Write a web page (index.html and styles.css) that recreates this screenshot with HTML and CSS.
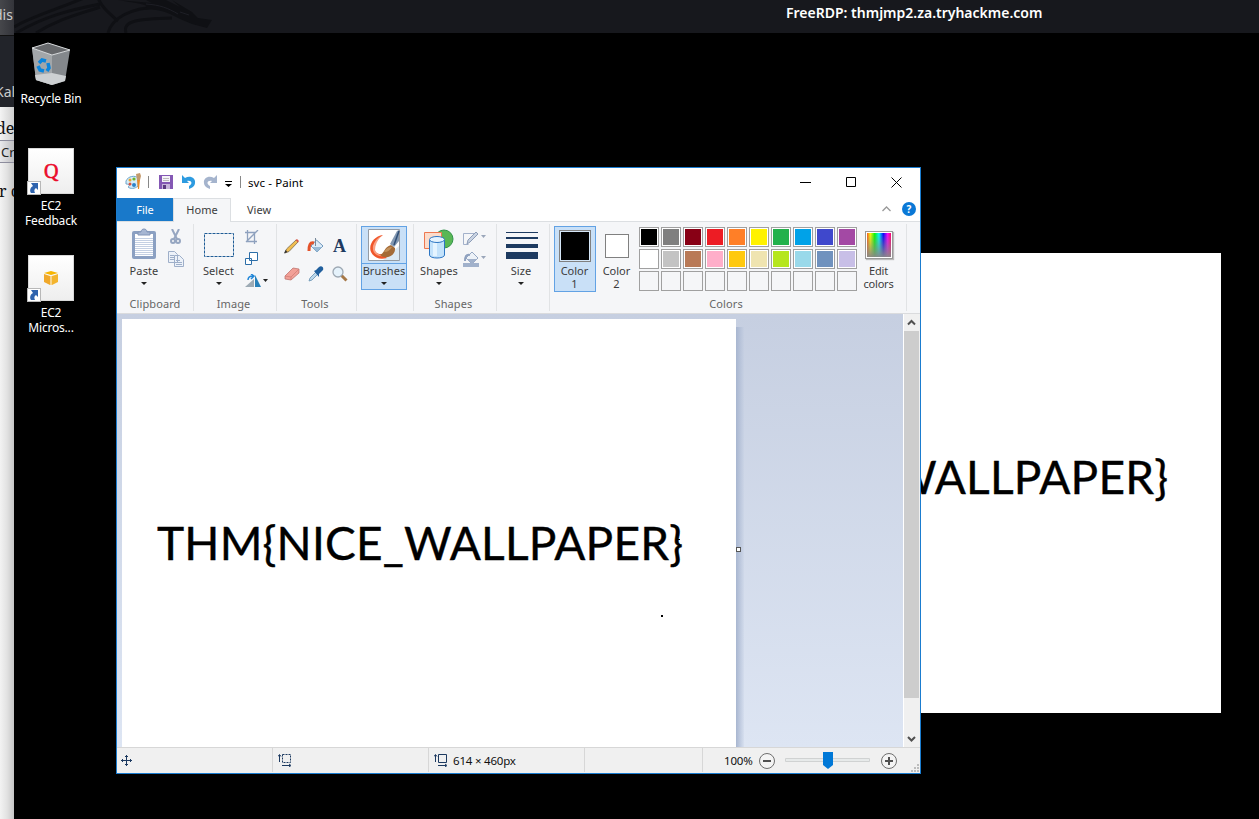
FILE: index.html
```html
<!DOCTYPE html>
<html lang="en">
<head>
<meta charset="utf-8">
<title>FreeRDP: thmjmp2.za.tryhackme.com</title>
<link rel="stylesheet" href="styles.css">
</head>
<body>
<div class="screen">
  <aside class="behind">
    <div class="behind-title"><span>dis</span></div>
    <div class="behind-tabs"><span>Kal</span></div>
    <div class="behind-line serif"><span>de</span></div>
    <div class="behind-box"><span>Cr</span></div>
    <div class="behind-page serif"><span>r o</span></div>
  </aside>
  <section class="remote">
    <header class="rdp-bar">
      <svg class="dragon" width="226" height="33" viewBox="14 0 226 33">
        <g fill="none" stroke="#0f1014" stroke-width="3">
          <path d="M14 27C30 17 55 10 84 -2"/><path d="M16 33C45 16 70 10 100 4"/><path d="M36 33C60 18 80 14 100 7"/>
          <path d="M98 -2C102 8 110 14 118 21"/><path d="M108 33C112 18 130 8 158 7"/><path d="M126 33C122 20 140 19 172 18"/>
        </g>
        <path fill="#0f1014" d="M118 0L152 3L142 -2H162L180 7L172 0L192 12L198 18L212 20L207 28L192 24L180 19L170 14C158 9 150 9 140 10C156 5 140 4 118 0Z"/>
        <path fill="none" stroke="#1d1e25" d="M146 4C160 5 168 8 178 14M180 12l9 3"/>
      </svg>
      <span class="rdp-title">FreeRDP: thmjmp2.za.tryhackme.com</span>
    </header>
    <nav class="shortcuts">
      <div class="shortcut bin">
        <svg width="40" height="44" viewBox="0 0 40 44">
          <path fill="#84888c" d="M1 6L20 13L39 8L34 39L21 43L5 38Z"/>
          <path fill="#a2a6a9" d="M1 6L21 13V43L5 38Z"/>
          <path fill="#66686b" d="M1 6L17 1L39 8L21 13Z"/>
          <path fill="#cdd0d2" d="M4 33L21 31L35 34L34 39L21 43L5 38Z"/>
          <path fill="none" stroke="#d9dcde" d="M1 6L17 1L39 8L21 13Z"/>
          <g fill="none" stroke="#0a84dc" stroke-width="3.500"><path d="M8 21l3-3 4 1"/><path d="M17 21l1 5-2 3"/><path d="M13 29l-4-1-2-4"/></g>
        </svg>
        <span>Recycle Bin</span>
      </div>
      <div class="shortcut">
        <div class="tile"><span class="q">Q</span><svg class="link" width="12" height="12" viewBox="0 0 12 12"><path fill="#fff" d="M0 0h12v12H0z"/><path fill="#2f64ae" d="M3 1h7v7L8 6C6 7 6 9 7 11H3C1 8 3 5 5 4Z"/></svg></div>
        <span>EC2<br>Feedback</span>
      </div>
      <div class="shortcut">
        <div class="tile"><svg width="16" height="16" viewBox="0 0 16 16"><path fill="#f7b500" d="M8 1L15 3L8 5L1 3Z"/><path fill="#f0a82a" d="M1 4L7 6V15L1 12Z"/><path fill="#f3b42e" d="M15 4L9 6V15L15 12Z"/><path fill="#f8d48c" d="M7 6h2v9H7z"/></svg><svg class="link" width="12" height="12" viewBox="0 0 12 12"><path fill="#fff" d="M0 0h12v12H0z"/><path fill="#2f64ae" d="M3 1h7v7L8 6C6 7 6 9 7 11H3C1 8 3 5 5 4Z"/></svg></div>
        <span>EC2<br>Micros...</span>
      </div>
    </nav>
  </section>

  <div class="wallpaper">
    <svg width="614" height="460"><text class="flag" x="35" y="241" textLength="526" lengthAdjust="spacing">THM{NICE_WALLPAPER}</text></svg>
  </div>

  <main class="paint">
    <div class="titlebar">
      <div class="quick">
        <svg width="18" height="18" viewBox="0 0 18 18"><path fill="#d7ecf8" stroke="#6da6cc" d="M2 8C4 3 11 2 14 5V13C11 16 6 16 4 14C7 12 4 11 2 11Z"/><circle cx="6" cy="7" r="1.500" fill="#e6a72c"/><circle cx="10" cy="6" r="1.600" fill="#6cb52d"/><circle cx="6" cy="11" r="1.500" fill="#d95445"/><circle cx="10" cy="12" r="2" fill="#2c83ca"/><path fill="#ea8a28" d="M13 7h3l-1 9h-1z"/><path fill="#c49a6c" d="M12 1l4-1 1 3-1 4h-3z"/></svg>
        <i class="bar"></i>
        <svg class="save" width="14" height="14"><path fill="#8458b4" d="M0 0h14v14H0z"/><path fill="#f4f2f8" d="M3 1h8v6H3z"/><path fill="#c6b4da" d="M3 9h8v5H3z"/><path fill="#5b3a80" d="M4 10h3v4H4z"/><path stroke="#bbb" d="M4 3.500h6M4 5.500h6"/></svg>
        <svg class="undo" width="14" height="14" viewBox="0 0 14 14"><path fill="#2d9be0" d="M0 0l3 3C8 0 14 3 13 8c0 3-3 5-6 6v-3c4-2 3-6-2-5l2 2H0z"/></svg>
        <svg class="redo" width="14" height="14" viewBox="0 0 14 14"><path fill="#a5b4cd" d="M14 0l-3 3C6 0 0 3 1 8c0 3 3 5 6 6v-3C3 9 4 5 9 6L7 8h7z"/></svg>
        <svg class="more" width="7" height="6"><path d="M0 0h7v1H0zM0 3h7L3.500 6z"/></svg>
        <i class="bar"></i>
      </div>
      <span class="title">svc - Paint</span>
      <div class="caption">
        <svg width="11" height="11"><path stroke="#000" d="M0 5.500h11"/></svg>
        <svg width="11" height="11"><path fill="none" stroke="#000" d="M.5.500h9v9h-9z"/></svg>
        <svg width="11" height="11"><path stroke="#000" d="M.5.500l10 10M10.500.500l-10 10"/></svg>
      </div>
    </div>
    <div class="tabs">
      <span class="tab file">File</span><span class="tab home">Home</span><span class="tab view">View</span>
      <div class="help">
        <svg width="9" height="6"><path fill="none" stroke="#999" stroke-width="1.300" d="M.5 5L4.500 1l4 4"/></svg>
        <span>?</span>
      </div>
    </div>
    <div class="ribbon">
      <div class="group clipboard">
        <div class="body">
          <div class="big">
            <div class="pic"><svg width="26" height="32" viewBox="0 0 26 32"><rect x="1" y="3" width="24" height="28" rx="2" fill="#8ba0c2"/><path fill="#fff" d="M4 6h18v22H4z"/><path stroke="#c4d0e3" d="M4 10.500h18M4 12.500h18M4 14.500h18M4 16.500h18M4 18.500h18M4 20.500h18M4 22.500h18M4 24.500h18M4 26.500h18"/><path fill="#a6b6d2" stroke="#8396b8" d="M7 7V4h3c0-4 6-4 6 0h3v3z"/></svg></div>
            <span>Paste</span><i class="arrow"></i>
          </div>
          <div class="stack">
            <svg width="16" height="16" viewBox="0 0 16 16"><g fill="none" stroke="#96a6c1" stroke-width="2"><path d="M4 0l5 10M11 0L6 10"/><circle cx="5" cy="12" r="2"/><circle cx="10" cy="12" r="2"/></g></svg>
            <svg width="16" height="16" viewBox="0 0 16 16"><g fill="#edf2f9" stroke="#9eafc9"><path d="M.5.500h6l3 3v8h-9zM6.500 4.500h5l4 4v7h-9z"/><path d="M2 4.500h4M2 6.500h4M2 8.500h4M8 9.500h4M8 11.500h6M8 13.500h6"/></g></svg>
          </div>
        </div>
        <footer>Clipboard</footer>
      </div>
      <div class="group image">
        <div class="body">
          <div class="big">
            <div class="pic"><svg width="30" height="24"><path fill="none" stroke="#1e5c96" stroke-dasharray="3 1" d="M.5.500h29v23H.5z"/></svg></div>
            <span>Select</span><i class="arrow"></i>
          </div>
          <div class="stack three">
            <svg width="14" height="14"><path fill="none" stroke="#8ea1be" stroke-width="1.300" d="M2.500 0v11.500H12M0 2.500h9.500V14M1 12L13 0"/></svg>
            <svg width="14" height="14"><path fill="#fff" stroke="#2c6ea8" d="M.5 6.500h6v6h-6zM4.500.500h8v8h-8z"/></svg>
            <svg width="24" height="14"><path fill="#9daab4" d="M0 13h9V5z"/><path fill="#2780b9" d="M10 1v12h6z"/><path fill="none" stroke="#2086d8" stroke-width="1.500" d="M3 6c0-3 2-4 5-4M6 0l3 2-3 3"/><path fill="#222" d="M18 5h5l-2.500 3z"/></svg>
          </div>
        </div>
        <footer>Image</footer>
      </div>
      <div class="group tools">
        <div class="body toolgrid">
          <svg width="16" height="16" viewBox="0 0 16 16"><path stroke="#6a5d48" stroke-width=".7" fill="#f0bd50" d="M1 15l1.500-4L12 2l2 2-9 9.500z"/><path fill="#d95a48" d="M11.500 2l1.500-1 2 2-1 1.500z"/><path fill="#333" d="M0 15.500L1.500 12l2 2z"/></svg>
          <svg width="17" height="16" viewBox="0 0 17 16"><path fill="#deecf8" stroke="#6d96bb" d="M9.500 2L16 8L10 14L4 8Z"/><path fill="#99bbd7" d="M5 9h10l-5 5z"/><path stroke="#789" d="M8.500 0v8"/><path fill="none" stroke="#e4532b" stroke-width="3" d="M7 5C3 4 2 7 2 13"/></svg>
          <span class="letter">A</span>
          <svg width="16" height="14" viewBox="0 0 16 14"><path fill="#f2a097" stroke="#b76b66" stroke-width=".7" d="M1 9L9 1l6 1v4l-8 7-6-1z"/><path stroke="#cf7b74" fill="none" stroke-width=".7" d="M1 9l6 1 8-8M7 10v3"/></svg>
          <svg width="16" height="16" viewBox="0 0 16 16"><path fill="#bdd8eb" stroke="#6590b1" stroke-width=".8" d="M1 15l1-3 6-6 2 2-6 6z"/><path fill="#205f9d" d="M6 5l2-1 3-3c3-2 5 1 4 3l-4 4v3z"/></svg>
          <svg width="16" height="16" viewBox="0 0 16 16"><path stroke="#a57847" stroke-width="3" d="M9.500 9.500l5 5"/><circle cx="6" cy="6" r="5" fill="#e5f2fb" stroke="#9da8b3" stroke-width="1.300"/></svg>
        </div>
        <footer>Tools</footer>
      </div>
      <div class="group brushes">
        <div class="big picked">
          <div class="pic"><svg width="32" height="32" viewBox="0 0 32 32"><path fill="#fff" stroke="#949ba4" d="M.5.500h31v31H.5z"/><path fill="#dbe9f4" d="M15 31L31 17v14z"/><path fill="#f0562a" d="M15 6C6 7 0 16 3 23C6 29 12 31 19 29L14 25C8 26 5 21 7 16C8 12 11 9 15 6Z"/><path fill="#f9a184" d="M5 17C7 11 10 9 13 7C9 12 7 16 7 21C9 26 13 26 16 27C9 28 4 24 5 17Z"/><path fill="#a46b37" d="M12 26c4-1 4-8 11-10l4 3c1 8-9 12-15 7z"/><path fill="#c3925d" d="M16 23c2-4 5-5 8-5-2 3-4 5-8 5z"/><path fill="#8398b1" d="M22 15L29 2l2-1v11l-5 6z"/><path stroke="#304f77" stroke-width="1.500" d="M31 2l-5 14"/></svg></div>
          <span>Brushes</span><i class="arrow"></i>
        </div>
      </div>
      <div class="group shapes">
        <div class="body">
          <div class="big">
            <div class="pic"><svg width="30" height="30" viewBox="0 0 30 30"><circle cx="20" cy="10" r="9" fill="#59b755" stroke="#32934a"/><path fill="#fbdccb" stroke="#ed7850" d="M.5 3.500h17v16H.5z"/><path fill="#c3e2fb" stroke="#2d76c3" d="M5.500 11v15c0 4 15 4 15 0V11"/><path fill="#e5f4ff" d="M9 13h4v14H9z"/><ellipse cx="13" cy="10.500" rx="7.500" ry="3" fill="#e5f3fe" stroke="#2d76c3"/></svg></div>
            <span>Shapes</span><i class="arrow"></i>
          </div>
          <div class="stack">
            <svg width="24" height="16"><path fill="none" stroke="#a3b1ca" d="M12 2.500H.5v11h5"/><path fill="#c9d3e2" stroke="#8d9db8" d="M4 13l1-4L13 1l2 2-8 8z"/><path fill="#9aa6ba" d="M18 4h5l-2.500 3z"/></svg>
            <svg width="24" height="17"><path fill="#edf2f8" stroke="#96a8c4" d="M9 1l6 6-6 6-6-6z"/><path fill="#a1b1cb" d="M4 8h10l-5 5zM0 12h16v4H0z"/><path fill="none" stroke="#8fa1bf" stroke-width="2" d="M7 4C3 3 2 6 2 10"/><path fill="#9aa6ba" d="M18 5h5l-2.500 3z"/></svg>
          </div>
        </div>
        <footer>Shapes</footer>
      </div>
      <div class="group size">
        <div class="body">
          <div class="big">
            <div class="pic"><svg width="32" height="28"><path fill="#1d3a60" d="M0 0h32v1H0zM0 5h32v2H0zM0 12h32v4H0zM0 20h32v7H0z"/></svg></div>
            <span>Size</span><i class="arrow"></i>
          </div>
        </div>
      </div>
      <div class="group colors">
        <div class="body">
          <div class="color picked"><div class="pic"><i class="well black"></i></div><span>Color<br>1</span></div>
          <div class="color"><div class="pic"><i class="well white"></i></div><span>Color<br>2</span></div>
          <div class="palette">
            <i style="background:#000"></i><i style="background:#7f7f7f"></i><i style="background:#880015"></i><i style="background:#ed1c24"></i><i style="background:#ff7f27"></i><i style="background:#fff200"></i><i style="background:#22b14c"></i><i style="background:#00a2e8"></i><i style="background:#3f48cc"></i><i style="background:#a349a4"></i>
            <i style="background:#fff"></i><i style="background:#c3c3c3"></i><i style="background:#b97a57"></i><i style="background:#ffaec9"></i><i style="background:#ffc90e"></i><i style="background:#efe4b0"></i><i style="background:#b5e61d"></i><i style="background:#99d9ea"></i><i style="background:#7092be"></i><i style="background:#c8bfe7"></i>
            <i class="none"></i><i class="none"></i><i class="none"></i><i class="none"></i><i class="none"></i><i class="none"></i><i class="none"></i><i class="none"></i><i class="none"></i><i class="none"></i>
          </div>
          <div class="color edit"><div class="pic"><i class="rainbow"></i></div><span>Edit<br>colors</span></div>
        </div>
        <footer>Colors</footer>
      </div>
    </div>
    <div class="workspace">
      <div class="desk">
        <div class="paper"><svg width="614" height="428"><text class="flag" x="35" y="241" textLength="526" lengthAdjust="spacing">THM{NICE_WALLPAPER}</text><path d="M556 220h2v1h-2zM539 296h2v2h-2z"/></svg><i class="handle"></i></div>
        <div class="shade"></div>
      </div>
      <div class="scroll">
        <svg width="15" height="17"><path fill="none" stroke="#505050" stroke-width="2" d="M4 10.500L7.500 7L11 10.500"/></svg>
        <i class="thumb"></i>
        <svg width="15" height="17"><path fill="none" stroke="#505050" stroke-width="2" d="M4 7L7.500 10.500L11 7"/></svg>
      </div>
    </div>
    <div class="status">
      <div class="cell c1"><svg width="11" height="11"><path fill="none" stroke="#1d3a60" d="M5.500 0v11M0 5.500h11M4 2l1.500-1.500L7 2M4 9l1.500 1.500L7 9M2 4L.5 5.500L2 7M9 4l1.500 1.500L9 7"/></svg></div>
      <div class="cell c2"><svg width="14" height="13"><path fill="none" stroke="#1d3a60" d="M1.500 8V1M0 2.500l1.500-2 1.500 2M4 11.500h8M11 10l2 1.500-2 1.500"/><path fill="none" stroke="#1d3a60" stroke-dasharray="2 1" d="M4.500.500h8v8h-8z"/></svg></div>
      <div class="cell c3"><svg width="14" height="13"><path fill="none" stroke="#1d3a60" d="M1.500 8V1M0 2.500l1.500-2 1.500 2M4 11.500h8M11 10l2 1.500-2 1.500M4.500.500h8v8h-8z"/></svg><span>614 × 460px</span></div>
      <div class="cell c4"></div>
      <div class="zoom">
        <span>100%</span>
        <svg width="16" height="16"><circle cx="8" cy="8" r="7.500" fill="#f4f4f4" stroke="#6e6e6e"/><path fill="#505050" d="M4 7h8v2H4z"/></svg>
        <svg class="slider" width="85" height="18"><path fill="#e7eaea" stroke="#d0d2d2" d="M.5 6.500h84v3H.5z"/><path fill="#0078d7" d="M38 0h10v13l-5 4-5-4z"/></svg>
        <svg width="16" height="16"><circle cx="8" cy="8" r="7.500" fill="#f4f4f4" stroke="#6e6e6e"/><path fill="#505050" d="M4 7h8v2H4zM7 4h2v8H7z"/></svg>
        <svg class="grip" width="8" height="8"><path fill="#bcbcbc" d="M6 0h2v2H6zM3 3h2v2H3zM6 3h2v2H6zM0 6h2v2H0zM3 6h2v2H3zM6 6h2v2H6z"/></svg>
      </div>
    </div>
  </main>
</div>
</body>
</html>
```
FILE: styles.css
```css
* { box-sizing: border-box; }
body { margin: 0; background: #000; font: 11px/13px "Noto Sans", sans-serif; }
svg { display: block; flex: none; }
i { display: block; flex: none; }
.screen { position: relative; display: flex; width: 1259px; height: 819px; overflow: hidden; background: #000; }

.behind { width: 14px; overflow: hidden; background: #eee; font-size: 14px; line-height: 20px; white-space: nowrap; }
.behind > div { display: flex; align-items: flex-start; }
.behind span { display: block; flex: none; }
.behind-title { height: 36px; padding-top: 5px; background: linear-gradient(90deg, #46474b, #33343a); color: #ccc; border-bottom: 1px solid #111; }
.behind-title span { margin-left: -6px; }
.behind-tabs { height: 71px; padding-top: 46px; background: #22242a; color: #ccc; }
.behind-tabs span { margin-left: -5px; }
.serif { font-family: "Noto Serif", "DejaVu Serif", serif; font-size: 16px; color: #111; }
.behind-line { height: 33px; padding-top: 11px; background: linear-gradient(90deg, #f4f4f4, #cfcfcf); }
.behind-line span { margin-left: -4px; }
.behind-box { height: 23px; padding-top: 1px; background: linear-gradient(90deg, #e9e9ec, #bdbdc0); border-top: 1px solid #8d8d9d; border-bottom: 1px solid #8d8d9d; font-size: 13px; color: #222; }
.behind-box span { margin-left: 1px; }
.behind-page { height: 656px; padding-top: 18px; background: linear-gradient(90deg, #f3f3f3, #e2e2e2 50%, #c6c6c6); }
.behind-page span { margin-left: -1px; }

.remote { flex: 1; }
.rdp-bar { display: flex; height: 33px; background: #17181d; color: #fff; }
.rdp-title { width: 258px; margin-left: 546px; font-size: 14px; line-height: 26px; font-weight: 600; white-space: nowrap; }
.shortcuts { display: flex; flex-direction: column; width: 74px; padding-top: 9px; color: #fff; }
.shortcut { display: flex; flex-direction: column; align-items: center; height: 107px; font-size: 12px; line-height: 15px; text-align: center; letter-spacing: -.2px; }
.shortcut > span { white-space: nowrap; margin-top: 4px; }
.bin { height: 106px; }
.bin > span { margin-top: 5px; }
.tile { position: relative; display: flex; align-items: center; justify-content: center; width: 46px; height: 46px; background: linear-gradient(#fff, #eee); border: 1px solid #d8d8d8; }
.q { font: 20px/20px "Liberation Serif", serif; color: #ea0a2a; -webkit-text-stroke: .6px #ea0a2a; }
.link { position: absolute; left: -2px; bottom: -2px; border: 1px solid #b8b8b8; box-sizing: content-box; }

.wallpaper { position: absolute; left: 607px; top: 253px; width: 614px; height: 460px; background: #fff; }
.flag { font: 46px Lato, sans-serif; fill: #000; stroke: #000; stroke-width: .4px; }

.paint { position: absolute; left: 116px; top: 167px; width: 805px; height: 607px; display: flex; flex-direction: column; background: #fff; border: 1px solid #1a7ccf; color: #3c3c3c; }
.titlebar { display: flex; align-items: center; height: 30px; padding-bottom: 2px; color: #000; }
.quick { display: flex; align-items: center; width: 124px; padding-left: 7px; }
.bar { width: 1px; height: 12px; background: #888; margin-left: 6px; }
.save { margin-left: 10px; }
.undo { margin-left: 9px; }
.redo { margin-left: 7px; }
.more { margin: 3px 0 0 8px; }
.more + .bar { margin-left: 8px; }
.title { margin-left: 7px; font-size: 11.500px; letter-spacing: .1px; }
.caption { display: flex; gap: 34.500px; margin-left: auto; padding-right: 18px; }
.tabs { display: flex; height: 24px; border-bottom: 1px solid #dcdfe2; }
.tab { text-align: center; line-height: 24px; font-size: 11px; }
.file { width: 56px; background: #1979ca; color: #fff; height: 23px; }
.home { width: 58px; height: 24px; background: #f5f6f8; border: 1px solid #dcdfe2; border-bottom: 0; line-height: 22px; }
.view { width: 56px; }
.help { display: flex; align-items: center; gap: 11px; margin: -1px 0 0 auto; padding-right: 4px; }
.help span { width: 14px; height: 14px; border-radius: 50%; background: #0a78d6; color: #fff; text-align: center; font-weight: bold; line-height: 14px; font-size: 10px; }

.ribbon { display: flex; height: 92px; padding-top: 2px; background: #f5f6f8; border-bottom: 1px solid #dadbdd; }
.group { position: relative; display: flex; flex-direction: column; height: 87px; border-right: 1px solid #e1e3e5; }
.body { display: flex; height: 73px; }
.group footer { text-align: center; color: #666; line-height: 14px; letter-spacing: .1px; }
.big { display: flex; flex-direction: column; align-items: center; }
.big .pic { display: flex; align-items: center; justify-content: center; height: 40px; }
.big > span { line-height: 13px; letter-spacing: .1px; white-space: nowrap; }
.arrow { width: 0; height: 0; margin-top: 5px; border: 3px solid transparent; border-top-color: #222; border-bottom: 0; }
.stack { display: flex; flex-direction: column; gap: 6px; padding-top: 5px; }
.clipboard { width: 77px; }
.clipboard .big { width: 54px; }
.clipboard .stack { margin-left: -3px; }
.image { width: 83px; }
.image footer { padding-right: 3px; }
.image .big { width: 50px; padding-right: 1px; }
.image .pic { padding: 1px 0 0 1px; }
.image .stack { gap: 8px; padding-top: 6px; margin-left: 1px; }
.tools { width: 80px; }
.tools footer { padding-right: 3px; }
.toolgrid { display: grid; grid-template-columns: repeat(3, 24px); grid-template-rows: 28px 28px; justify-content: center; justify-items: center; align-items: center; padding: 8px 2px 0 0; }
.letter { font: bold 18px/20px "Liberation Serif", serif; color: #1d3a60; }
.brushes { width: 57px; padding: 2px 0 0 4px; }
.brushes .big { width: 46px; height: 64px; border: 1px solid #62a2e4; background: #c9e0f7; }
.brushes .pic { width: 44px; height: 37px; border-bottom: 1px solid #62a2e4; }
.shapes { width: 83px; }
.shapes footer { padding-right: 3px; }
.shapes .big { width: 50px; }
.shapes .stack { gap: 4px; padding-top: 7px; margin-left: -1px; }
.size { width: 53px; }
.size .big { width: 49px; }
.size .pic { padding-top: 4px; }
.size .big > span, .size .arrow { margin-left: -1px; }
.colors { width: 357px; }
.colors footer { padding-right: 4px; }
.color { display: flex; flex-direction: column; align-items: center; width: 42px; height: 66px; margin-top: 2px; text-align: center; border: 1px solid transparent; }
.colors .body { padding-left: 4px; }
.color .pic { display: flex; align-items: center; justify-content: center; height: 37px; }
.color > span { letter-spacing: 0; margin-left: -1px; }
.color.picked { background: #c9e0f7; border-color: #62a2e4; }
.well { border: 1px solid #808080; }
.well.black { width: 32px; height: 32px; background: #000; box-shadow: inset 0 0 0 1px #d5e7f8; }
.well.white { width: 24px; height: 24px; background: #fff; }
.palette { display: grid; grid-template-columns: repeat(10, 20px); grid-auto-rows: 20px; gap: 2px; margin: 3px 0 0 1px; }
.palette i { border: 1px solid #a0a0a0; box-shadow: inset 0 0 0 1px #fff; }
.palette .none { box-shadow: none; }
.rainbow { width: 28px; height: 28px; border: 1px solid #999; box-shadow: inset 0 0 0 1px #fff, 1px 1px 1px #bbb; background: linear-gradient(transparent, #888), linear-gradient(90deg, #f22, #ff0, #0f0, #0ff, #00f, #f0f, #f03); }
.edit { align-self: flex-start; }
.edit .pic { padding: 0 0 2px 1px; }
.edit span { letter-spacing: -.2px; margin-left: 1px; }

.workspace { display: flex; height: 433px; }
.desk { display: flex; flex: 1; padding: 5px 0 0 5px; background: linear-gradient(#c6cfe1, #dde5f3); }
.paper { position: relative; width: 614px; height: 428px; background: #fff; }
.handle { position: absolute; left: 614px; top: 228px; width: 5px; height: 5px; border: 1px solid #555; background: #fff; }
.shade { width: 8px; margin-top: 8px; background: linear-gradient(90deg, #a8b6d0, rgba(190, 202, 224, .2)); }
.scroll { display: flex; flex-direction: column; width: 17px; background: #f0f0f0; border-left: 1px solid #fff; }
.thumb { flex: 1; background: #cdcdcd; margin: 0 1px 32px 0; }
.status { display: flex; flex: 1; background: #f0f0f0; border-top: 1px solid #d7d7d7; color: #111; }
.cell { display: flex; align-items: center; height: 24px; border-right: 1px solid #d7d7d7; padding-left: 5px; }
.c1 { width: 156px; padding-left: 4px; }
.c2, .c3 { width: 156px; }
.c3 span { margin-left: 5px; font-size: 11.500px; letter-spacing: -.2px; }
.c4 { width: 118px; }
.zoom { position: relative; display: flex; align-items: center; padding-left: 21px; }
.zoom span { width: 35px; font-size: 11.500px; letter-spacing: -.2px; }
.slider { margin: 0 11px 0 10px; }
.grip { position: absolute; right: -22px; bottom: 1px; }
```
